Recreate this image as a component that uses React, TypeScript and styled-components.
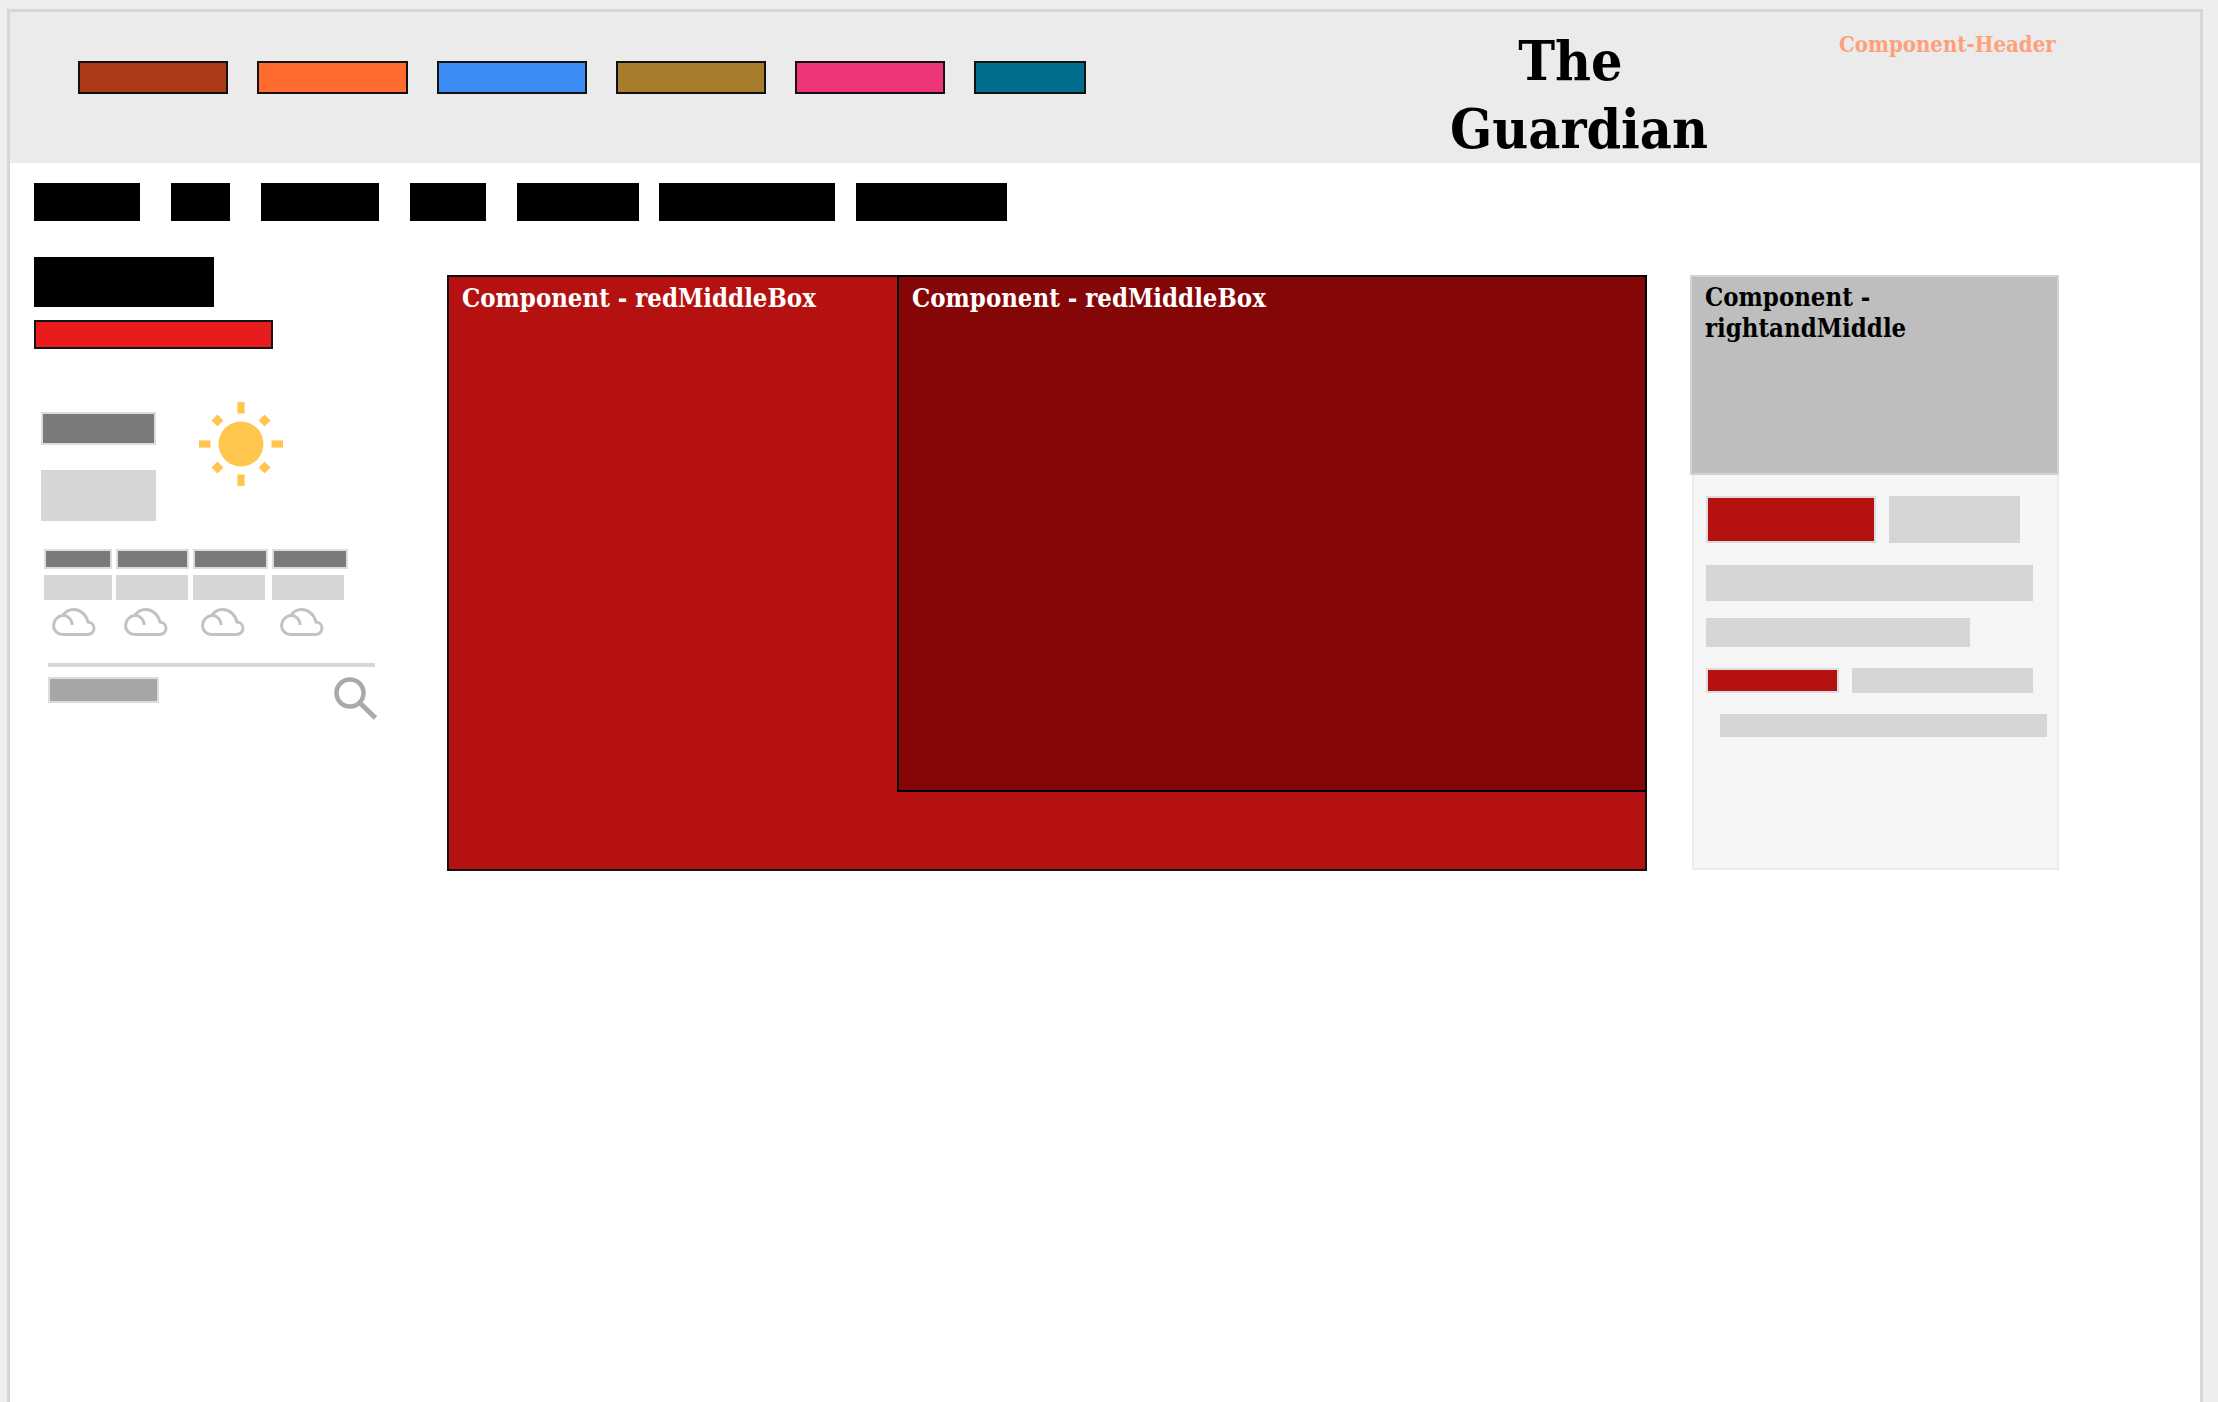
import React from "react";
import styled, { createGlobalStyle } from "styled-components";

const GlobalStyle = createGlobalStyle`
  html, body {
    margin: 0;
    height: 100%;
    background: #eeeeee;
    overflow: hidden;
  }
  body {
    font-family: "DejaVu Serif Condensed", "DejaVu Serif", serif;
    font-stretch: condensed;
  }
`;

const Frame = styled.div`
  margin: 9px 15px 0 7px;
  height: 1393px;
  box-sizing: border-box;
  border: 3px solid #d6d6d6;
  border-bottom: 0;
  background: #fff;
`;

const Header = styled.header`
  display: flex;
  height: 151px;
  background: #ebebeb;
`;

const SwatchRow = styled.div`
  display: flex;
  gap: 29px;
  padding: 49px 0 0 68px;
  width: 1076px;
  box-sizing: border-box;
`;

const Swatch = styled.div<{ $color: string; $width?: number }>`
  width: ${(p) => p.$width ?? 151}px;
  height: 33px;
  box-sizing: border-box;
  border: 2px solid #111;
  background: ${(p) => p.$color};
`;

const Title = styled.h1`
  width: 300px;
  margin: 15px 0 0 343px;
  font-size: 55px;
  line-height: 68px;
  font-weight: 700;
  text-align: center;
  color: #000;
`;

const HeaderTag = styled.span`
  margin: 17px 0 0 110px;
  font-size: 22px;
  line-height: 30px;
  font-weight: 700;
  color: #ffa07a;
  white-space: nowrap;
`;

const Nav = styled.nav`
  display: flex;
  height: 38px;
  margin-top: 20px;
  padding-left: 24px;
`;

const NavItem = styled.div<{ $width: number; $gap: number }>`
  width: ${(p) => p.$width}px;
  margin-right: ${(p) => p.$gap}px;
  background: #000;
`;

const Content = styled.div`
  display: flex;
  padding-left: 24px;
`;

const Sidebar = styled.aside`
  width: 413px;
  flex: none;
  padding-top: 36px;
`;

const Headline = styled.div`
  width: 180px;
  height: 50px;
  background: #000;
`;

const RedBar = styled.div`
  width: 239px;
  height: 29px;
  margin-top: 13px;
  box-sizing: border-box;
  border: 2px solid #151515;
  background: #e81c1c;
`;

const Weather = styled.div`
  display: flex;
  gap: 43px;
  margin: 53px 0 0 7px;
`;

const WeatherLabels = styled.div`
  display: flex;
  flex-direction: column;
  width: 115px;
  padding-top: 10px;
`;

const TempLabel = styled.div`
  height: 33px;
  box-sizing: border-box;
  border: 2px solid #dcdcdc;
  background: #7a7a7a;
`;

const TempValue = styled.div`
  height: 51px;
  margin-top: 25px;
  background: #d6d6d6;
`;

const Forecast = styled.div`
  display: flex;
  margin: 28px 0 0 10px;
`;

const Day = styled.div<{ $width: number; $gap: number }>`
  width: ${(p) => p.$width}px;
  margin-right: ${(p) => p.$gap}px;
  flex: none;
`;

const DayLabel = styled.div`
  height: 20px;
  box-sizing: border-box;
  border: 2px solid #dcdcdc;
  background: #7a7a7a;
`;

const DayValue = styled.div<{ $width: number }>`
  width: ${(p) => p.$width}px;
  height: 25px;
  margin-top: 6px;
  background: #d6d6d6;
`;

const CloudWrap = styled.div`
  display: block;
  margin: 8px 0 0 8px;
  height: 28px;
  line-height: 0;
`;

const SearchBlock = styled.div`
  width: 327px;
  margin: 27px 0 0 14px;
  border-top: 4px solid #d6d6d6;
`;

const SearchRow = styled.div`
  display: flex;
  justify-content: space-between;
  padding-top: 10px;
  margin-right: -3px;
`;

const SearchLabel = styled.div`
  width: 111px;
  height: 26px;
  box-sizing: border-box;
  border: 2px solid #dcdcdc;
  background: #a6a6a6;
`;

const RedBox = styled.section`
  display: flex;
  align-items: flex-start;
  width: 1200px;
  height: 596px;
  margin-top: 54px;
  box-sizing: border-box;
  border: 2px solid #111;
  background: #b51111;
`;

const BoxText = styled.div`
  padding: 5px 0 0 13px;
  font-size: 25.5px;
  line-height: 32px;
  font-weight: 700;
  color: #fff;
  white-space: nowrap;
`;

const BoxLabel = styled(BoxText)`
  width: 448px;
  flex: none;
  box-sizing: border-box;
`;

const DarkBox = styled.div`
  flex: 1;
  height: 513px;
  margin: -2px -2px 0 0;
  border: 2px solid #000;
  background: #840606;
`;

const RightColumn = styled.div`
  width: 369px;
  margin: 54px 0 0 43px;
  flex: none;
`;

const GreyBox = styled.div`
  height: 200px;
  box-sizing: border-box;
  padding: 5px 13px;
  border: 2px solid #d2d2d2;
  background: #bebebe;
  font-size: 25.5px;
  line-height: 31px;
  font-weight: 700;
  color: #000;
`;

const Panel = styled.div`
  height: 395px;
  margin-left: 2px;
  box-sizing: border-box;
  padding: 21px 0 0 12px;
  border: 2px solid #ececec;
  border-top: 0;
  background: #f5f5f5;
`;

const PanelRow = styled.div<{ $gap: number; $top?: number }>`
  display: flex;
  gap: ${(p) => p.$gap}px;
  margin-top: ${(p) => p.$top ?? 0}px;
`;

const RedTag = styled.div<{ $width: number; $height: number }>`
  width: ${(p) => p.$width}px;
  height: ${(p) => p.$height}px;
  box-sizing: border-box;
  border: 2px solid #dcdcdc;
  background: #b51111;
`;

const GreyBar = styled.div<{ $width: number; $height: number; $top?: number; $left?: number }>`
  width: ${(p) => p.$width}px;
  height: ${(p) => p.$height}px;
  margin-top: ${(p) => p.$top ?? 0}px;
  margin-left: ${(p) => p.$left ?? 0}px;
  background: #d5d5d5;
`;

function SunIcon() {
  const rays = [0, 45, 90, 135, 180, 225, 270, 315];
  return (
    <svg width="84" height="84" viewBox="0 0 84 84" fill="#ffc54d">
      <circle cx="42" cy="42" r="22.5" />
      {rays.map((angle) => (
        <rect
          key={angle}
          x={angle % 90 === 0 ? 38.4 : 37.8}
          y={angle % 90 === 0 ? 0 : 4.5}
          width={angle % 90 === 0 ? 7.2 : 8.4}
          height={angle % 90 === 0 ? 11.5 : 8.4}
          transform={`rotate(${angle} 42 42)`}
        />
      ))}
    </svg>
  );
}

function CloudIcon() {
  return (
    <svg width="44" height="28" viewBox="0 0 44 28" fill="none" stroke="#c2c2c2" strokeWidth="3">
      <path d="M10.500 26.500H35.500c3.800 0 6.500-2.800 6.500-6.200 0-3.400-2.600-6-6-6.200C34.500 6.800 28.500 1.500 21.700 1.500c-4.500 0-8.500 2.300-10.500 5.800C5.500 8 1.500 12.500 1.500 17.500c0 5 4 9 9 9z" />
      <path d="M11.200 7.300c5 .2 8.800 4.200 9 9.700" />
    </svg>
  );
}

function SearchIcon() {
  return (
    <svg width="44" height="43" viewBox="0 0 44 43" fill="none" stroke="#a9a9a9">
      <circle cx="16" cy="16" r="13.500" strokeWidth="4.500" />
      <path d="M27 27l14.500 14" strokeWidth="5" />
    </svg>
  );
}

const swatches = [
  { color: "#ad3a17" },
  { color: "#ff6a2e" },
  { color: "#3d8bf5" },
  { color: "#a87c2d" },
  { color: "#ef3579" },
  { color: "#006e8c", width: 112 },
];

const navItems = [
  { width: 106, gap: 31 },
  { width: 59, gap: 31 },
  { width: 118, gap: 31 },
  { width: 76, gap: 31 },
  { width: 122, gap: 20 },
  { width: 176, gap: 21 },
  { width: 151, gap: 0 },
];

const days = [
  { width: 68, gap: 4, value: 68 },
  { width: 73, gap: 4, value: 72 },
  { width: 75, gap: 4, value: 72 },
  { width: 76, gap: 0, value: 72 },
];

export default function App() {
  return (
    <>
      <GlobalStyle />
      <Frame>
        <Header>
          <SwatchRow>
            {swatches.map((s) => (
              <Swatch key={s.color} $color={s.color} $width={s.width} />
            ))}
          </SwatchRow>
          <Title>The&nbsp; Guardian</Title>
          <HeaderTag>Component-Header</HeaderTag>
        </Header>
        <Nav>
          {navItems.map((n, i) => (
            <NavItem key={i} $width={n.width} $gap={n.gap} />
          ))}
        </Nav>
        <Content>
          <Sidebar>
            <Headline />
            <RedBar />
            <Weather>
              <WeatherLabels>
                <TempLabel />
                <TempValue />
              </WeatherLabels>
              <SunIcon />
            </Weather>
            <Forecast>
              {days.map((d, i) => (
                <Day key={i} $width={d.width} $gap={d.gap}>
                  <DayLabel />
                  <DayValue $width={d.value} />
                  <CloudWrap>
                    <CloudIcon />
                  </CloudWrap>
                </Day>
              ))}
            </Forecast>
            <SearchBlock>
              <SearchRow>
                <SearchLabel />
                <SearchIcon />
              </SearchRow>
            </SearchBlock>
          </Sidebar>
          <RedBox>
            <BoxLabel>Component - redMiddleBox</BoxLabel>
            <DarkBox>
              <BoxText>Component - redMiddleBox</BoxText>
            </DarkBox>
          </RedBox>
          <RightColumn>
            <GreyBox>
              Component -<br />
              rightandMiddle
            </GreyBox>
            <Panel>
              <PanelRow $gap={13}>
                <RedTag $width={170} $height={47} />
                <GreyBar $width={131} $height={47} />
              </PanelRow>
              <GreyBar $width={327} $height={36} $top={22} />
              <GreyBar $width={264} $height={29} $top={17} />
              <PanelRow $gap={13} $top={21}>
                <RedTag $width={133} $height={25} />
                <GreyBar $width={181} $height={25} />
              </PanelRow>
              <GreyBar $width={327} $height={23} $top={21} $left={14} />
            </Panel>
          </RightColumn>
        </Content>
      </Frame>
    </>
  );
}
